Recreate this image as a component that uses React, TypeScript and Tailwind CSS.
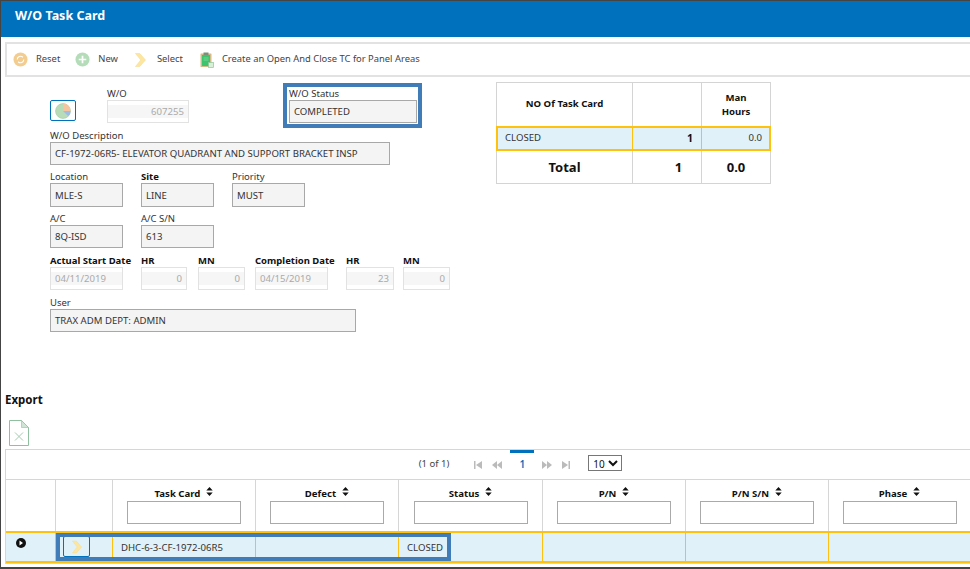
const font = { fontFamily: '"Noto Sans", sans-serif' };

function Chevron({ className }: { className: string }) {
  return (
    <svg viewBox="0 0 11 14" className={className}>
      <path d="M.5.5h4.200L10.500 7l-5.800 6.500H.5L5.800 7z" fill="#fde7a0" stroke="#f6dc90" strokeWidth="0.6" />
    </svg>
  );
}

function SortIcon() {
  return (
    <svg viewBox="0 0 7 9" className="w-[7px] h-[9px] ml-[6px] -mt-[5px] shrink-0">
      <path d="M3.500 0l3.200 3.600H.3zM3.500 9L.3 5.400h6.400z" fill="#111" />
    </svg>
  );
}

function Field({ label, value, w, h, bold, disabled, right }: { label: string; value: string; w: string; h?: string; bold?: boolean; disabled?: boolean; right?: boolean }) {
  return (
    <div className={w}>
      <div className={`h-[14px] leading-[15px] text-[9.5px] ${bold ? 'font-bold text-[#111]' : 'text-[#333]'}`}>{label}</div>
      {disabled ? (
        <div className={`${h ?? 'h-[23px]'} border border-[#e2e2e2] bg-white py-[4px]`}>
          <div className={`h-full bg-[#f6f6f6] px-[4px] pt-[1px] flex items-center text-[9.6px] text-[#aaa] ${right ? 'justify-end' : ''}`}>{value}</div>
        </div>
      ) : (
        <div className={`${h ?? 'h-[23px]'} border border-[#a8a8a8] bg-[#f4f4f4] px-[4px] pt-[2px] flex items-center text-[9.6px] text-[#333]`}>{value}</div>
      )}
    </div>
  );
}

function PagerIcon({ d }: { d: string }) {
  return (
    <svg viewBox="0 0 10 10" className="w-[10px] h-[10px]">
      <path d={d} fill="#bbb" />
    </svg>
  );
}

const columns = ['Task Card', 'Defect', 'Status', 'P/N', 'P/N S/N', 'Phase'];
const colWidths = ['w-[143px]', 'w-[143px]', 'w-[144px]', 'w-[143px]', 'w-[143px]', 'flex-1'];

export default function App() {
  return (
    <div style={font} className="relative w-[970px] h-[569px] overflow-hidden bg-white border-l border-t border-b-2 border-[#444] flex flex-col">
      {/* Header */}
      <div className="h-[36px] shrink-0 bg-[#0071bc] flex items-center pl-[14px] pb-[6px] text-white text-[12.5px] font-bold">W/O Task Card</div>

      {/* Toolbar */}
      <div className="ml-[4px] mt-[5px] h-[35px] shrink-0 border-2 border-r-0 border-[#e2e2e2] flex items-center pl-[6px] text-[9.4px] text-[#444]">
        <svg viewBox="0 0 16 16" className="w-[15px] h-[15px]">
          <circle cx="8" cy="8" r="7.500" fill="#f3cd8f" />
          <path d="M4.500 8a3.500 3.500 0 0 1 6-2.400M11.500 8a3.500 3.500 0 0 1-6 2.400" fill="none" stroke="#fff" strokeWidth="1.2" />
        </svg>
        <span className="ml-[8px]">Reset</span>
        <svg viewBox="0 0 16 16" className="w-[15px] h-[15px] ml-[15px]">
          <circle cx="8" cy="8" r="7.500" fill="#b5dcb9" />
          <path d="M8 4v8M4 8h8" stroke="#fff" strokeWidth="1.8" />
        </svg>
        <span className="ml-[8px]">New</span>
        <Chevron className="w-[11px] h-[14px] ml-[17px]" />
        <span className="ml-[11px]">Select</span>
        <svg viewBox="0 0 14 16" className="w-[14px] h-[16px] ml-[17px]">
          <rect x="0.500" y="1.500" width="11" height="13.500" rx="0.5" fill="#d9b98a" />
          <rect x="2" y="3" width="8" height="11" fill="#3ec46d" />
          <rect x="3.500" y="0.500" width="5" height="2.500" fill="#7d8f7a" />
          <path d="M3.500 6h5M3.500 8h5" stroke="#8fe0ab" strokeWidth="0.7" />
          <rect x="8.500" y="10.500" width="5" height="5" fill="#d8f0d8" stroke="#8cc79a" strokeWidth="0.7" />
        </svg>
        <span className="ml-[8px]">Create an Open And Close TC for Panel Areas</span>
      </div>

      {/* Form and summary */}
      <div className="flex h-[316px] shrink-0">
        <div className="w-[495px] pl-[49px] shrink-0">
          <div className="flex items-end h-[47px] pb-[1px]">
            <button className="w-[26px] h-[21px] mb-[2px] border border-[#0071bc] rounded-[2px] flex items-center justify-center">
              <svg viewBox="0 0 16 16" className="w-[16px] h-[16px]">
                <circle cx="8" cy="8" r="7.500" fill="#b9dcb8" stroke="#9cc29b" strokeWidth="0.5" />
                <path d="M8 8V.5A7.500 7.500 0 0 1 15.500 8z" fill="#f6c5a0" />
                <path d="M8 8h7.500a7.500 7.500 0 0 1-2.200 5.300z" fill="#9cbce8" />
              </svg>
            </button>
            <Field label="W/O" value="607255" w="w-[82px] ml-[31px]" disabled right />
            <div className="ml-[94px] -mb-[5px] w-[139px] h-[45px] border-[4px] border-[#3f7cb8] pl-[2px] pr-[1px]">
              <Field label="W/O Status" value="COMPLETED" w="w-full -mt-[1px]" />
            </div>
          </div>
          <div className="mt-[4px]">
            <Field label="W/O Description" value="CF-1972-06R5- ELEVATOR QUADRANT AND SUPPORT BRACKET INSP" w="w-[340px]" />
          </div>
          <div className="flex gap-[18px] mt-[4px]">
            <Field label="Location" value="MLE-S" w="w-[73px]" h="h-[24px]" />
            <Field label="Site" value="LINE" w="w-[73px]" h="h-[24px]" bold />
            <Field label="Priority" value="MUST" w="w-[73px]" h="h-[24px]" />
          </div>
          <div className="flex gap-[18px] mt-[4px]">
            <Field label="A/C" value="8Q-ISD" w="w-[73px]" />
            <Field label="A/C S/N" value="613" w="w-[73px]" />
          </div>
          <div className="flex mt-[5px]">
            <Field label="Actual Start Date" value="04/11/2019" w="w-[73px] whitespace-nowrap" bold disabled />
            <Field label="HR" value="0" w="w-[46px] ml-[18px]" bold disabled right />
            <Field label="MN" value="0" w="w-[47px] ml-[11px]" bold disabled right />
            <Field label="Completion Date" value="04/15/2019" w="w-[73px] ml-[10px] whitespace-nowrap" bold disabled />
            <Field label="HR" value="23" w="w-[48px] ml-[18px]" bold disabled right />
            <Field label="MN" value="0" w="w-[47px] ml-[9px]" bold disabled right />
          </div>
          <div className="mt-[5px]">
            <Field label="User" value="TRAX ADM DEPT: ADMIN" w="w-[306px]" />
          </div>
        </div>

        {/* Summary table */}
        <div className="mt-[5px] w-[275px] h-[102px] border border-[#d4d4d4] flex flex-col text-[#111]">
          <div className="h-[43px] flex text-[9.6px] font-bold text-center">
            <div className="w-[136px] border-r border-[#d4d4d4] flex items-center justify-center">NO Of Task Card</div>
            <div className="w-[69px] border-r border-[#d4d4d4]" />
            <div className="flex-1 flex items-center justify-center leading-[14px]">Man<br />Hours</div>
          </div>
          <div className="h-[25px] -mx-[1px] flex bg-[#e1f1f9] border-2 border-[#fec10d] text-[9.6px]">
            <div className="w-[135px] border-r border-[#fec10d] pl-[7px] flex items-center text-[#333]">CLOSED</div>
            <div className="w-[69px] border-r border-[#fec10d] pr-[8px] flex items-center justify-end font-bold text-[10.5px]">1</div>
            <div className="flex-1 pr-[7px] flex items-center justify-end text-[#333]">0.0</div>
          </div>
          <div className="flex-1 flex font-bold text-[13px] text-center pt-[2px]">
            <div className="w-[136px] -mt-[2px] pt-[2px] border-r border-[#d4d4d4] flex items-center justify-center">Total</div>
            <div className="w-[69px] -mt-[2px] pt-[2px] border-r border-[#d4d4d4] flex items-center justify-center pl-[23px]">1</div>
            <div className="flex-1 flex items-center justify-center">0.0</div>
          </div>
        </div>
      </div>

      {/* Export */}
      <div className="ml-[4px] h-[14px] leading-[14px] text-[11.5px] font-bold text-[#111] shrink-0">Export</div>
      <div className="ml-[8px] mt-[13px] h-[26px] shrink-0">
        <svg viewBox="0 0 20 26" className="w-[20px] h-[26px]">
          <path d="M.5.5h12l7 7v18H.5z" fill="#fff" stroke="#8fc0a0" />
          <path d="M12.500.5v7h7z" fill="#cfe4d5" stroke="#8fc0a0" strokeWidth="0.6" />
          <path d="M6 12.500l8 8M14 12.500l-8 8" stroke="#a5cdb0" strokeWidth="1" />
        </svg>
      </div>

      {/* Data table */}
      <div className="relative ml-[4px] mt-[3px] border border-r-0 border-[#d6d6d6] shrink-0">
        <div className="h-[30px] flex items-center justify-center text-[9.5px] text-[#444] border-b border-[#d6d6d6] pl-[65px]">
          <span className="mr-[24px]">(1 of 1)</span>
          <div className="flex items-center">
            <PagerIcon d="M1 1h1.500v8H1zM9 1v8L3 5z" />
            <div className="ml-[9px]"><PagerIcon d="M5 1v8L0 5zM10 1v8L5 5z" /></div>
            <div className="relative w-[24px] ml-[8px] text-center text-[#0071bc] font-semibold text-[10px]">
              <span className="absolute -top-[7px] left-0 w-[24px] h-[3px] bg-[#0071bc]" />
              1
            </div>
            <div className="ml-[8px]"><PagerIcon d="M0 1v8l5-4zM5 1v8l5-4z" /></div>
            <div className="ml-[9px]"><PagerIcon d="M1 1v8l6-4zM7.500 1H9v8H7.500z" /></div>
          </div>
          <select className="self-start mt-[5px] ml-[17px] w-[34px] h-[16px] border border-[#777] text-[10px] text-[#111] bg-white" defaultValue="10">
            <option value="10">10</option>
          </select>
        </div>

        <div className="h-[51px] flex">
          <div className="w-[50px] border-r border-[#d6d6d6]" />
          <div className="w-[57px] border-r border-[#d6d6d6]" />
          {columns.map((c, i) => (
            <div key={c} className={`${colWidths[i]} ${i < 5 ? 'border-r border-[#d6d6d6]' : ''} flex flex-col items-center pt-[7px]`}>
              <div className="h-[14px] flex items-center text-[9.6px] font-bold text-[#111]">
                {c}
                <SortIcon />
              </div>
              <div className="w-[114px] h-[23px] border border-[#aaa] bg-white" />
            </div>
          ))}
        </div>

        <div className="h-[32px] flex bg-[#e1f1f9] border-y-2 border-[#fec10d] text-[9.6px] text-[#333]">
          <div className="w-[50px] border-r border-[#fec10d] flex justify-center pt-[5px] pr-[20px]">
            <svg viewBox="0 0 10 10" className="w-[10px] h-[10px]">
              <circle cx="5" cy="5" r="5" fill="#111" />
              <path d="M3.500 2.500L7 5 3.500 7.500z" fill="#fff" />
            </svg>
          </div>
          <div className="w-[57px] border-r border-[#fec10d] pl-[7px] pb-[1px] flex items-center">
            <button className="w-[27px] h-[21px] border border-[#0071bc] rounded-[2px] flex items-center justify-center">
              <Chevron className="w-[10px] h-[14px]" />
            </button>
          </div>
          <div className="w-[143px] border-r border-[#fec10d] pl-[8px] pt-[2px] flex items-center">DHC-6-3-CF-1972-06R5</div>
          <div className="w-[143px] border-r border-[#fec10d]" />
          <div className="w-[144px] border-r border-[#fec10d] pl-[8px] pt-[2px] flex items-center">CLOSED</div>
          <div className="w-[143px] border-r border-[#fec10d]" />
          <div className="w-[143px] border-r border-[#fec10d]" />
          <div className="flex-1" />
        </div>

        {/* highlight around the selected cells */}
        <div className="absolute left-[50px] top-[83px] w-[395px] h-[28px] border-[4px] border-[#3f7cb8]" />
      </div>
    </div>
  );
}
